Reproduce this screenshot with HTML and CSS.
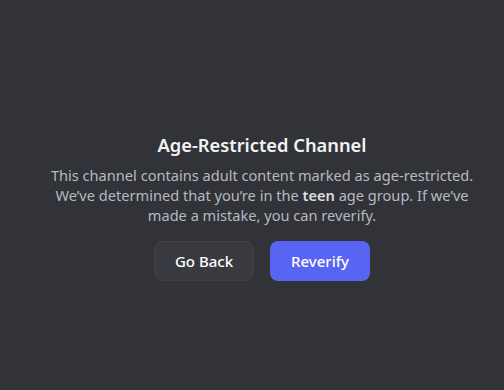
FILE: index.html
```html
<!DOCTYPE html>
<html>
<head>
    <meta charset='utf-8'>
    <title>Age-Restricted Channel</title>
    <link rel="stylesheet" href="styles.css">
</head>
<body>
<div class="gate">
    <div class="gateBox">
        <h2 class="gateTitle">Age-Restricted Channel</h2>
        <p class="gateText">This channel contains adult content marked as age-restricted. We’ve determined that you’re in the <strong>teen</strong> age group. If we’ve made a mistake, you can reverify.</p>
        <div class="gateButtons">
            <button class="btn btnSecondary">Go Back</button>
            <button class="btn btnPrimary">Reverify</button>
        </div>
    </div>
</div>
</body>
</html>
```

FILE: styles.css
```css
html, body {
    margin: 0;
    height: 100%;
    background-color: #313338;
}

body {
    font-family: "Noto Sans", "Open Sans", sans-serif;
}

.gate {
    height: 100%;
    display: flex;
    align-items: center;
    justify-content: center;
    padding: 24px 0 0 20px;
    box-sizing: border-box;
}

.gateBox {
    width: 436px;
    display: flex;
    flex-direction: column;
    align-items: center;
    text-align: center;
}

.gateTitle {
    margin: 0 0 8px;
    font-size: 18.3px;
    line-height: 24px;
    font-weight: 600;
    color: #f2f3f5;
}

.gateText {
    margin: 0 0 16px;
    font-size: 14.6px;
    line-height: 20px;
    color: #b5bac1;
}

.gateText strong {
    font-weight: 600;
    color: #dbdee1;
}

.gateButtons {
    display: flex;
    gap: 16px;
}

.btn {
    width: 100px;
    height: 40px;
    border: 0;
    border-radius: 8px;
    font-family: inherit;
    font-size: 15px;
    font-weight: 500;
    color: #ffffff;
}

.btnSecondary {
    background-color: #393a3f;
    border: 1px solid #404147;
}

.btnPrimary {
    background-color: #5865f2;
}
```
